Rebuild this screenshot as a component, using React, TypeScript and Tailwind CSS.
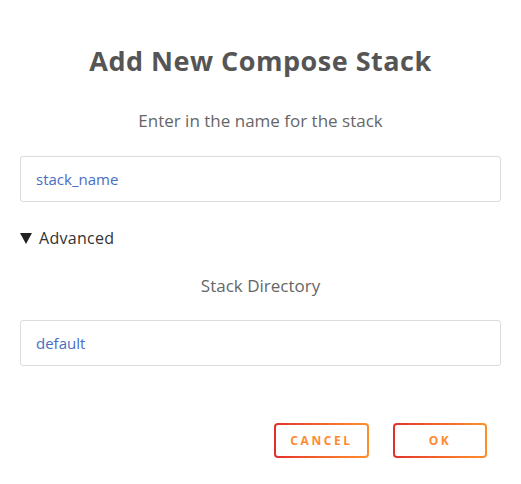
export default function App() {
  return (
    <div className="w-[521px] h-[484px] bg-white flex flex-col px-5" style={{ fontFamily: '"Open Sans", "Noto Sans", sans-serif' }}>
      <h1 className="mt-[43px] text-center text-[27px] leading-[36px] font-bold text-[#555555] tracking-[0.5px]">Add New Compose Stack</h1>
      <p className="mt-[30px] text-center text-[17px] leading-[24px] text-[#666666] tracking-[0px]">Enter in the name for the stack</p>
      <div className="mt-[23px] h-[46px] border border-[#dcdcdc] rounded-[3px] flex items-center pl-[15px] text-[15px] text-[#4a6cc3]">stack_name</div>
      <div className="mt-[24px] flex items-center gap-[7px] text-[16px] text-[#333333] leading-[24px]">
        <svg width="12" height="11" viewBox="0 0 12 11"><path d="M0 0 H12 L6 11 Z" fill="#222" /></svg>
        <span className="tracking-[0.3px]">Advanced</span>
      </div>
      <p className="mt-[24px] text-center text-[17px] leading-[24px] text-[#666666] tracking-[0px]">Stack Directory</p>
      <div className="mt-[22px] h-[46px] border border-[#dcdcdc] rounded-[3px] flex items-center pl-[15px] text-[15px] text-[#4a6cc3]">default</div>
      <div className="mt-[57px] flex justify-end gap-[24px] pr-[14px]">
        <div className="w-[95px] h-[35px] p-[2px] rounded-[4px] bg-linear-to-r from-[#e32d2d] to-[#ff8f2a]">
          <div className="w-full h-full bg-white rounded-[2px] flex items-center justify-center text-[12px] font-bold tracking-[2.6px] text-[#ff8a33]">CANCEL</div>
        </div>
        <div className="w-[94px] h-[35px] p-[2px] rounded-[4px] bg-linear-to-r from-[#e32d2d] to-[#ff8f2a]">
          <div className="w-full h-full bg-white rounded-[2px] flex items-center justify-center text-[12px] font-bold tracking-[2.6px] text-[#ff8a33]">OK</div>
        </div>
      </div>
    </div>
  );
}
